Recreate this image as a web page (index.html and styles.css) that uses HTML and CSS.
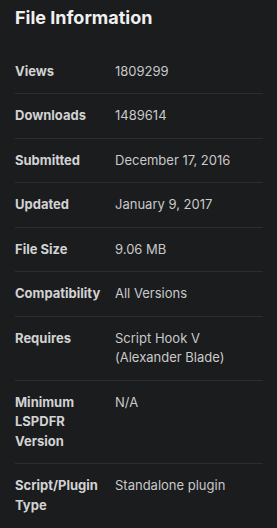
FILE: index.html
```html
<!DOCTYPE html>
<html lang="en">
<head>
    <meta charset="UTF-8">
    <meta name="viewport" content="width=device-width, initial-scale=1.0">
    <title>File Information</title>
    <link rel="stylesheet" href="styles.css">
</head>
<body>
    <div class="file-info">
        <h2 class="file-info-title">File Information</h2>

        <!-- details list -->
        <dl class="info-list">
            <div class="info-row">
                <dt>Views</dt>
                <dd>1809299</dd>
            </div>
            <div class="info-row">
                <dt>Downloads</dt>
                <dd>1489614</dd>
            </div>
            <div class="info-row">
                <dt>Submitted</dt>
                <dd>December 17, 2016</dd>
            </div>
            <div class="info-row">
                <dt>Updated</dt>
                <dd>January 9, 2017</dd>
            </div>
            <div class="info-row">
                <dt>File Size</dt>
                <dd>9.06 MB</dd>
            </div>
            <div class="info-row">
                <dt>Compatibility</dt>
                <dd>All Versions</dd>
            </div>
            <div class="info-row">
                <dt>Requires</dt>
                <dd>Script Hook V (Alexander Blade)</dd>
            </div>
            <div class="info-row">
                <dt>Minimum LSPDFR Version</dt>
                <dd>N/A</dd>
            </div>
            <div class="info-row">
                <dt>Script/Plugin Type</dt>
                <dd>Standalone plugin</dd>
            </div>
        </dl>
    </div>
</body>
</html>
```

FILE: styles.css
```css
body {
    margin: 0;
    background-color: #1b1c1e;
    font-family: Inter, "Noto Sans", sans-serif;
    color: #cfcfcf;
}

.file-info {
    padding: 5px 14px 0 15px;
}

.file-info-title {
    margin: 0 0 18.5px 0;
    font-size: 18px;
    line-height: 26px;
    font-weight: 700;
    color: #f0f0f0;
}

.info-list {
    margin: 0;
}

.info-row {
    display: grid;
    grid-template-columns: 100px 1fr;
    padding: 12px 0;
    border-bottom: 1px solid #2c2d30;
    font-size: 13px;
    line-height: 1.5;
}
.info-row:last-child {
    border-bottom: none;
}

.info-row dt {
    font-weight: 700;
    color: #d2d2d2;
}

.info-row dd {
    margin: 0;
    color: #c9c9c9;
}
```
